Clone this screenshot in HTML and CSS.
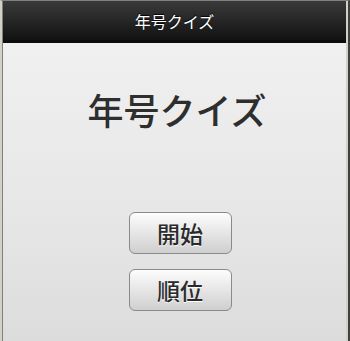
FILE: index.html
```html
<!DOCTYPE html>
<html lang="ja">
<head>
<meta charset="utf-8">
<title>年号クイズ</title>
<link rel="stylesheet" href="styles.css">
</head>
<body>
<div class="frame">
  <div class="page">
    <header class="bar">
      <h1 class="bar-title">年号クイズ</h1>
    </header>
    <main class="content">
      <h2 class="title">年号クイズ</h2>
      <div class="actions">
        <a class="btn" href="#">開始</a>
        <a class="btn" href="#">順位</a>
      </div>
    </main>
  </div>
</div>
</body>
</html>
```
FILE: styles.css
```css
html, body {
  margin: 0;
  padding: 0;
  width: 350px;
  height: 341px;
  overflow: hidden;
}
body {
  font-family: "Noto Sans CJK JP", "Noto Sans", sans-serif;
  background: #d4d0c8;
}
.frame {
  box-sizing: border-box;
  width: 350px;
  height: 341px;
  border-top: 1px solid #808080;
  border-left: 2px solid #d4d0c8;
  border-right: 2px solid #404040;
  display: flex;
  flex-direction: column;
}
.page {
  flex: 1;
  display: flex;
  flex-direction: column;
  border-left: 1px solid #808080;
  border-right: 2px solid #d4d0c8;
  box-shadow: inset 1px 0 0 #e8e8e8;
}
.bar {
  height: 39px;
  border-bottom: 3px solid #0c0c0c;
  background: linear-gradient(#3a3a3a, #121212);
  display: flex;
  align-items: center;
  justify-content: center;
}
.bar-title {
  margin: 0;
  font-size: 16px;
  font-weight: normal;
  color: #fff;
  line-height: 1;
  text-shadow: 0 -1px 1px #000;
}
.content {
  flex: 1;
  background: linear-gradient(#eff0ef, #e6e6e6 60%, #dcdcdc);
  display: flex;
  flex-direction: column;
  align-items: center;
}
.title {
  margin: 40px 0 0 5px;
  font-size: 36px;
  font-weight: 500;
  color: #2e2e2e;
  line-height: 52px;
}
.actions {
  margin: 77px 0 0 11px;
  display: flex;
  flex-direction: column;
  gap: 15px;
}
.btn {
  box-sizing: border-box;
  width: 103px;
  height: 42px;
  border: 1px solid #8a8a8a;
  border-radius: 6px;
  background: linear-gradient(#fdfdfd, #e8e8e8 45%, #cfcfcf);
  color: #2a2a2a;
  text-decoration: none;
  font-size: 23px;
  font-weight: 500;
  display: flex;
  align-items: center;
  justify-content: center;
  text-shadow: 0 1px 0 #fff;
}
```
